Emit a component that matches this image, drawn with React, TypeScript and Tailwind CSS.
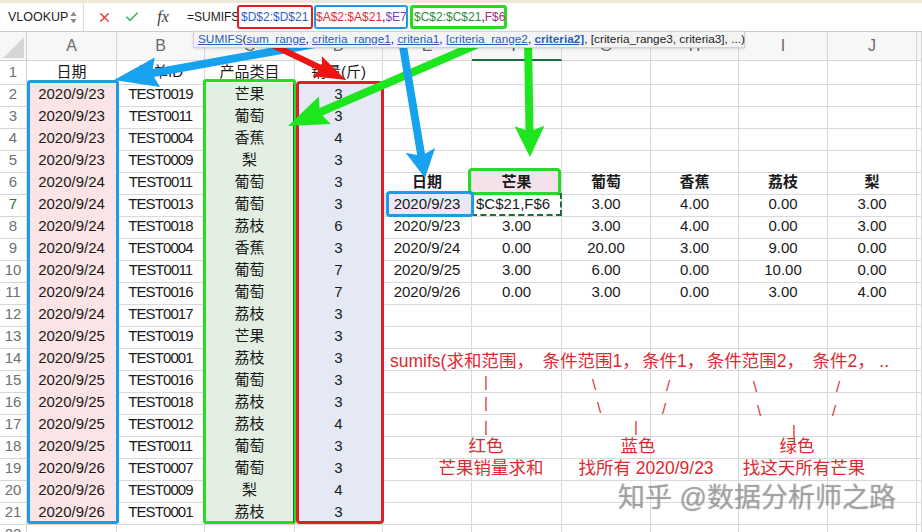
import React from 'react';
import { X, Check } from 'lucide-react';

const GRID = 'grid grid-cols-[27px_90px_88px_90px_88px_89px_90px_89px_88px_89px_89px_1fr]';
const LETTERS = ['A', 'B', 'C', 'D', 'E', 'F', 'G', 'H', 'I', 'J', 'K'];

const sales = [
  ['2020/9/23', 'TEST0019', '芒果', '3'],
  ['2020/9/23', 'TEST0011', '葡萄', '3'],
  ['2020/9/23', 'TEST0004', '香蕉', '4'],
  ['2020/9/23', 'TEST0009', '梨', '3'],
  ['2020/9/24', 'TEST0011', '葡萄', '3'],
  ['2020/9/24', 'TEST0013', '葡萄', '3'],
  ['2020/9/24', 'TEST0018', '荔枝', '6'],
  ['2020/9/24', 'TEST0004', '香蕉', '3'],
  ['2020/9/24', 'TEST0011', '葡萄', '7'],
  ['2020/9/24', 'TEST0016', '葡萄', '7'],
  ['2020/9/24', 'TEST0017', '荔枝', '3'],
  ['2020/9/25', 'TEST0019', '芒果', '3'],
  ['2020/9/25', 'TEST0001', '荔枝', '3'],
  ['2020/9/25', 'TEST0016', '葡萄', '3'],
  ['2020/9/25', 'TEST0018', '荔枝', '3'],
  ['2020/9/25', 'TEST0012', '荔枝', '4'],
  ['2020/9/25', 'TEST0011', '葡萄', '3'],
  ['2020/9/26', 'TEST0007', '葡萄', '3'],
  ['2020/9/26', 'TEST0009', '梨', '4'],
  ['2020/9/26', 'TEST0001', '荔枝', '3'],
];

const summary: Record<number, string[]> = {
  6: ['日期', '芒果', '葡萄', '香蕉', '荔枝', '梨'],
  7: ['2020/9/23', '$C$21,F$6', '3.00', '4.00', '0.00', '3.00'],
  8: ['2020/9/23', '3.00', '3.00', '4.00', '0.00', '3.00'],
  9: ['2020/9/24', '0.00', '20.00', '3.00', '9.00', '0.00'],
  10: ['2020/9/25', '3.00', '6.00', '0.00', '10.00', '0.00'],
  11: ['2020/9/26', '0.00', '3.00', '0.00', '3.00', '4.00'],
};

const cellValue = (r: number, c: number) => {
  if (r === 1 && c < 4) return ['日期', '订单ID', '产品类目', '销量(斤)'][c];
  if (r >= 2 && r <= 21 && c < 4) return sales[r - 2][c];
  if (summary[r] && c >= 4 && c <= 9) return summary[r][c - 4];
  return '';
};

const cellClass = (r: number, c: number) => {
  const data = r >= 2 && r <= 21;
  if (data && c === 0) return 'justify-center bg-[#fbe4e5]';
  if (data && c === 1) return 'justify-center tracking-[-0.9px]';
  if (data && c === 2) return 'justify-center bg-[#e3efe2]';
  if (data && c === 3) return 'justify-center bg-[#e5e9f6]';
  if (r === 6 && c === 5) return 'justify-center bg-[#f4e2eb] font-bold';
  if (r === 6 && c >= 4 && c <= 9) return 'justify-center font-bold';
  if (r === 7 && c === 4) return 'justify-center bg-[#ebe7f5]';
  if (r === 7 && c === 5) return 'justify-start pl-[4px]';
  return 'justify-center';
};

const arrow = (x1: number, y1: number, x2: number, y2: number, sw: number, hl: number, hw: number) => {
  const dx = x2 - x1;
  const dy = y2 - y1;
  const len = Math.hypot(dx, dy);
  const ux = dx / len;
  const uy = dy / len;
  const px = -uy;
  const py = ux;
  const bx = x2 - ux * hl;
  const by = y2 - uy * hl;
  const pts = [
    [x1 + (px * sw) / 2, y1 + (py * sw) / 2],
    [bx + (px * sw) / 2, by + (py * sw) / 2],
    [bx + px * hw - ux * 4, by + py * hw - uy * 4],
    [x2, y2],
    [bx - px * hw - ux * 4, by - py * hw - uy * 4],
    [bx - (px * sw) / 2, by - (py * sw) / 2],
    [x1 - (px * sw) / 2, y1 - (py * sw) / 2],
  ];
  return pts.map((p) => p.map((v) => v.toFixed(1)).join(',')).join(' ');
};

const marks = [
  { ch: '|', x: 486, y: 374 },
  { ch: '\\', x: 594, y: 377 },
  { ch: '/', x: 668, y: 378 },
  { ch: '\\', x: 755, y: 379 },
  { ch: '/', x: 838, y: 379 },
  { ch: '|', x: 486, y: 395 },
  { ch: '\\', x: 599, y: 400 },
  { ch: '/', x: 664, y: 401 },
  { ch: '\\', x: 759, y: 403 },
  { ch: '/', x: 834, y: 403 },
  { ch: '|', x: 486, y: 419 },
  { ch: '|', x: 636, y: 419 },
  { ch: '|', x: 794, y: 423 },
];

const labels = [
  { text: '红色', x: 486, y: 436 },
  { text: '芒果销量求和', x: 491, y: 458 },
  { text: '蓝色', x: 638, y: 436 },
  { text: '找所有 2020/9/23', x: 646, y: 458 },
  { text: '绿色', x: 797, y: 436 },
  { text: '找这天所有芒果', x: 804, y: 458 },
];

const App = () => {
  return (
    <div
      className="relative h-[532px] w-[922px] overflow-hidden bg-white text-[#1a1a1a]"
      style={{ fontFamily: '"Liberation Sans", "Noto Sans CJK SC", sans-serif' }}
    >
      <div className="h-[3px] bg-[#efe8d9]" />

      {/* formula bar */}
      <div className="flex h-[29px] items-center border-b border-[#cdcdcd]">
        <div className="flex h-full w-[84px] items-center border-r border-[#dcdcdc] pl-[8px]">
          <span className="text-[12.5px] text-[#222]">VLOOKUP</span>
          <svg className="ml-auto mr-[6px]" width="7" height="13" viewBox="0 0 7 13">
            <polygon points="3.5,0.5 6.5,5 0.5,5" fill="#8a8a8a" />
            <polygon points="0.5,8 6.5,8 3.5,12.5" fill="#8a8a8a" />
          </svg>
        </div>
        <div className="flex h-full w-[103px] items-center">
          <div className="ml-[10px] flex w-[20px] justify-center">
            <X size={15} strokeWidth={2.4} color="#e0463c" />
          </div>
          <div className="ml-[8px] flex w-[20px] justify-center">
            <Check size={16} strokeWidth={2.4} color="#46b85a" />
          </div>
          <div className="ml-[11px] flex w-[20px] justify-center">
            <span className="text-[16px] italic text-[#3a3a3a]" style={{ fontFamily: '"Liberation Serif", serif' }}>
              fx
            </span>
          </div>
        </div>
        <div className="flex h-full items-center text-[12px] whitespace-nowrap">
          <span className="w-[50px]">=SUMIFS</span>
          <span className="flex h-[24px] w-[76px] items-center rounded-[3px] border-2 border-[#e31d25] pl-[2px] text-[#2f5fc4]">
            $D$2:$D$21
          </span>
          <span className="ml-[1px] flex h-[24px] w-[94px] items-center rounded-[3px] border-2 border-[#1f9be6] text-[#d63235]">
            $A$2:$A$21<span className="text-[#222]">,</span>
            <span className="text-[#7b46b4]">$E7</span>
          </span>
          <span className="ml-[2px] flex h-[24px] w-[97px] items-center rounded-[3px] border-[3px] border-[#24dc24] pl-[1px] text-[#2c8a3b]">
            $C$2:$C$21<span className="text-[#222]">,</span>
            <span className="text-[#a3327c]">F$6</span>
          </span>
        </div>
      </div>

      {/* column headers */}
      <div className={`${GRID} h-[29px]`}>
        <div className="relative border-r border-b border-[#cfcfcf] bg-[#f7f7f7]">
          <svg className="absolute left-0 top-0" width="27" height="29" viewBox="0 0 27 29">
            <polygon points="24,5 24,26 3,26" fill="#d6d6d6" />
          </svg>
        </div>
        {LETTERS.map((l) => (
          <div
            key={l}
            className={
              l === 'F'
                ? 'flex items-center justify-center border-r border-b-2 border-r-[#d6d6d6] border-b-[#1d6b3a] bg-[#f7f7f7] text-[16px] text-[#555]'
                : 'flex items-center justify-center overflow-hidden border-r border-b border-[#d6d6d6] bg-[#f7f7f7] text-[16px] text-[#6a6a6a]'
            }
          >
            {l === 'K' ? '' : l}
          </div>
        ))}
      </div>

      {/* rows */}
      {Array.from({ length: 22 }, (_, i) => i + 1).map((r) => (
        <div key={r} className={`${GRID} h-[22px]`}>
          <div
            className={
              r === 7
                ? 'flex items-center justify-center border-r border-b border-[#d6d6d6] text-[15px] text-[#1f7a3f]'
                : 'flex items-center justify-center border-r border-b border-[#d6d6d6] text-[15px] text-[#707070]'
            }
          >
            {r}
          </div>
          {LETTERS.map((l, c) => (
            <div
              key={l}
              className={`flex items-center overflow-hidden whitespace-nowrap border-r border-b border-[#d9d9d9] text-[15px] ${cellClass(r, c)}`}
            >
              {cellValue(r, c)}
            </div>
          ))}
        </div>
      ))}

      {/* highlight boxes */}
      <div className="absolute left-[27px] top-[80px] h-[444px] w-[92px] rounded-[3px] border-[3px] border-[#1f9be6]" />
      <div className="absolute left-[203px] top-[79px] h-[445px] w-[93px] rounded-[3px] border-[3px] border-[#24dc24]" />
      <div className="absolute left-[293px] top-[84px] h-[439px] w-[1px] bg-[#1d6b3a]" />
      <div className="absolute left-[296px] top-[81px] h-[443px] w-[88px] rounded-[4px] border-[3px] border-[#e31d25]" />
      <div className="absolute left-[471px] top-[193px] h-[23px] w-[91px] border-2 border-dashed border-[#1d6b3a]" />
      <div className="absolute left-[468px] top-[168px] h-[27px] w-[93px] rounded-[4px] border-[3px] border-[#24dc24]" />
      <div className="absolute left-[386px] top-[191px] h-[26px] w-[88px] rounded-[4px] border-[3px] border-[#1f9be6]" />

      {/* arrows */}
      <svg className="pointer-events-none absolute left-0 top-0" width="922" height="532" viewBox="0 0 922 532">
        <polygon points={arrow(326, 42, 114, 80, 8, 40, 15)} fill="#17a2ef" />
        <polygon points={arrow(262, 40, 346, 80, 6, 28, 11)} fill="#ee1414" />
        <polygon points={arrow(478, 44, 288, 126, 8, 36, 15)} fill="#1ee61e" />
        <polygon points={arrow(402, 40, 425, 178, 8, 24, 15)} fill="#17a2ef" />
        <polygon points={arrow(528, 40, 530, 157, 8, 27, 15)} fill="#1ee61e" />
      </svg>

      {/* annotations */}
      <div className="absolute left-[390px] top-[351px] flex whitespace-nowrap text-[17.5px] leading-[20px] text-[#dc2a30]">
        <span>sumifs(求和范围</span>
        <span className="w-[26px]">，</span>
        <span>条件范围1</span>
        <span className="w-[20px]">，</span>
        <span>条件1</span>
        <span className="w-[20px]">，</span>
        <span>条件范围2</span>
        <span className="w-[26px]">，</span>
        <span>条件2</span>
        <span className="w-[22px]">，</span>
        <span>..</span>
      </div>
      {marks.map((m, i) => (
        <div
          key={i}
          className="absolute w-[10px] text-center text-[15px] leading-[15px] text-[#dc2a30]"
          style={{ left: m.x - 5, top: m.y }}
        >
          {m.ch}
        </div>
      ))}
      {labels.map((l) => (
        <div
          key={l.text}
          className="absolute w-[200px] whitespace-nowrap text-center text-[17.5px] leading-[20px] text-[#dc2a30]"
          style={{ left: l.x - 100, top: l.y }}
        >
          {l.text}
        </div>
      ))}
      <div className="absolute left-[618px] top-[482px] whitespace-nowrap text-[27px] leading-[32px] text-[rgba(160,160,160,0.55)] [text-shadow:0_0_1px_rgba(60,60,60,0.5)]">
        知乎 @数据分析师之路
      </div>

      {/* function tooltip */}
      <div className="absolute left-[193px] top-[31px] h-[17px] w-[552px] whitespace-nowrap border border-[#d2d2d2] bg-[#f3f3f3] pl-[4px] text-[11.8px] leading-[15px] text-[#222] shadow-sm">
        <span className="text-[#2b5db8] underline">SUMIFS</span>(
        <span className="text-[#2b5db8] underline">sum_range</span>,{' '}
        <span className="text-[#2b5db8] underline">criteria_range1</span>,{' '}
        <span className="text-[#2b5db8] underline">criteria1</span>,{' '}
        <span className="text-[#2b5db8] underline">[criteria_range2</span>,{' '}
        <span className="font-bold text-[#2b5db8] underline">criteria2]</span>, [criteria_range3, criteria3], ...)
      </div>
    </div>
  );
};

export default App;
